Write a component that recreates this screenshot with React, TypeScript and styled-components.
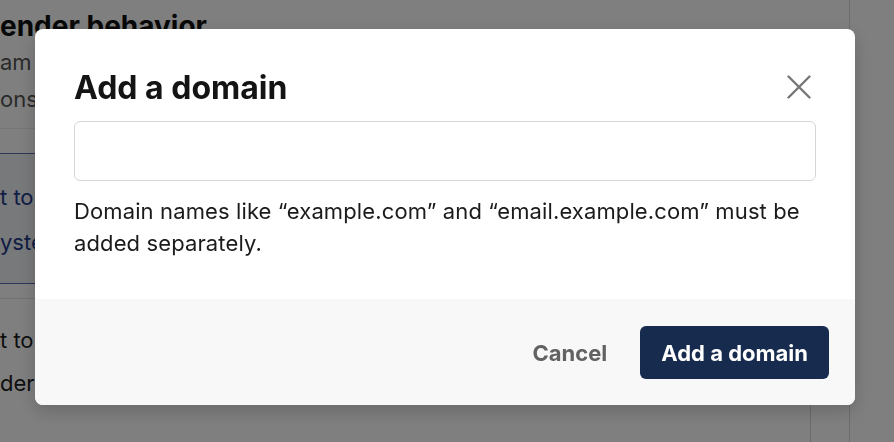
import React from "react";
import styled, { createGlobalStyle } from "styled-components";

const Global = createGlobalStyle`
  html, body { margin: 0; padding: 0; }
  body {
    width: 894px;
    height: 442px;
    overflow: hidden;
    background: #ffffff;
    font-family: Inter, "Liberation Sans", sans-serif;
  }
  * { box-sizing: border-box; }
`;

const Page = styled.div`
  display: flex;
  width: 894px;
  height: 442px;
  overflow: hidden;
`;

const Main = styled.main`
  width: 850px;
  flex: none;
  border-right: 1px solid #d8d8d8;
  display: flex;
  flex-direction: column;
`;

const Aside = styled.aside`
  flex: 1;
`;

const Heading = styled.h1`
  margin: 9px 0 0;
  font-size: 28px;
  line-height: 34px;
  font-weight: 700;
  color: #111;
  white-space: nowrap;
`;

const Lead = styled.p`
  margin: 1px 0 0;
  font-size: 22px;
  line-height: 37px;
  color: #555;
  white-space: nowrap;
`;

const Divider = styled.hr`
  margin: 10px 0 0;
  border: none;
  border-top: 1px solid #ececec;
`;

const Notice = styled.div`
  margin-top: 24px;
  height: 131px;
  border-top: 1px solid #5a6fb0;
  border-bottom: 1px solid #5a6fb0;
  background: #f1f2f4;
  padding-top: 21px;
  font-size: 22px;
  line-height: 45px;
  color: #223a8a;
  white-space: nowrap;
`;

const Card = styled.div`
  margin-top: 14px;
  width: 811px;
  flex: 1;
  border-top: 1px solid #e6e6e6;
  border-right: 1px solid #d8d8d8;
  padding-top: 20px;
  font-size: 22px;
  line-height: 43px;
  color: #1d1d1d;
  white-space: nowrap;
`;

const Overlay = styled.div`
  position: fixed;
  inset: 0;
  background: rgba(0, 0, 0, 0.5);
  display: flex;
  align-items: center;
  justify-content: center;
  padding: 0 4px 8px 0;
`;

const Dialog = styled.div`
  width: 820px;
  height: 376px;
  background: #ffffff;
  border-radius: 8px;
  overflow: hidden;
  box-shadow: 0 6px 18px rgba(0, 0, 0, 0.18);
  display: flex;
  flex-direction: column;
`;

const Body = styled.div`
  flex: 1;
  padding: 40px 39px 0 39px;
`;

const TitleRow = styled.div`
  display: flex;
  align-items: center;
  justify-content: space-between;
`;

const Title = styled.h2`
  margin: 0;
  font-size: 32px;
  line-height: 38px;
  font-weight: 700;
  color: #141414;
`;

const CloseButton = styled.button`
  width: 34px;
  height: 34px;
  border: none;
  background: transparent;
  padding: 0;
  display: flex;
  align-items: center;
  justify-content: center;
  margin-top: -3px;
  cursor: pointer;
`;

const Input = styled.input`
  display: block;
  width: 100%;
  height: 60px;
  margin-top: 14px;
  border: 1px solid #d6d6d6;
  border-radius: 6px;
  background: #fff;
  outline: none;
  padding: 0 16px;
  font-size: 22px;
  font-family: inherit;
`;

const Help = styled.p`
  margin: 14px 0 0;
  font-size: 22px;
  line-height: 32px;
  letter-spacing: 0.12px;
  color: #1b1b1b;
`;

const Footer = styled.div`
  height: 106px;
  flex: none;
  background: #f8f8f8;
  display: flex;
  align-items: center;
  justify-content: flex-end;
  gap: 17px;
  padding: 1px 26px 0 0;
`;

const GhostButton = styled.button`
  border: none;
  background: transparent;
  font-family: inherit;
  font-size: 22px;
  font-weight: 700;
  color: #626262;
  padding: 0 16px;
  height: 53px;
  cursor: pointer;
`;

const PrimaryButton = styled.button`
  border: none;
  background: #172b4f;
  color: #ffffff;
  font-family: inherit;
  font-size: 22px;
  font-weight: 700;
  height: 53px;
  padding: 0 21px;
  border-radius: 6px;
  cursor: pointer;
`;

export default function App() {
  return (
    <>
      <Global />
      <Page>
        <Main>
          <Heading>ender behavior</Heading>
          <Lead>
            am com
            <br />
            onses
          </Lead>
          <Divider />
          <Notice>
            t to
            <br />
            ystem
          </Notice>
          <Card>
            t to
            <br />
            der
          </Card>
        </Main>
        <Aside />
      </Page>
      <Overlay>
        <Dialog role="dialog" aria-label="Add a domain">
          <Body>
            <TitleRow>
              <Title>Add a domain</Title>
              <CloseButton aria-label="Close">
                <svg width="24" height="24" viewBox="0 0 24 24" fill="none">
                  <path
                    d="M1.5 1.5L22.5 22.5M22.5 1.5L1.5 22.5"
                    stroke="#777"
                    strokeWidth="2.4"
                    strokeLinecap="round"
                  />
                </svg>
              </CloseButton>
            </TitleRow>
            <Input type="text" />
            <Help>
              Domain names like “example.com” and “email.example.com” must be
              added separately.
            </Help>
          </Body>
          <Footer>
            <GhostButton>Cancel</GhostButton>
            <PrimaryButton>Add a domain</PrimaryButton>
          </Footer>
        </Dialog>
      </Overlay>
    </>
  );
}
